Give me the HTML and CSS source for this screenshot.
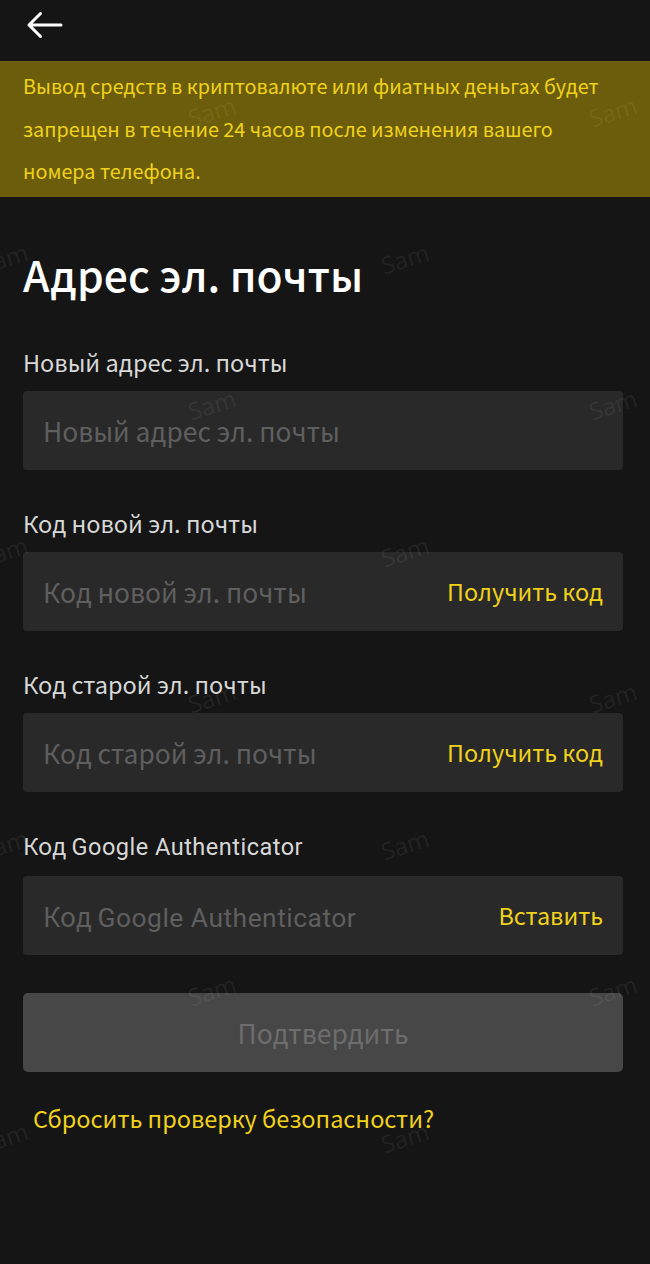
FILE: index.html
```html
<!DOCTYPE html>
<html>
<head>
    <title>Адрес эл. почты</title>
    <link rel="stylesheet" href="styles.css">
</head>
<body>
    <div class="page">
        <div class="top-bar">
            <svg class="back" width="40" height="30" viewBox="0 0 40 30">
                <path d="M5 14 H37 M5 14 L16.5 2.5 M5 14 L16.5 25.5" fill="none" stroke="#fff" stroke-width="3" stroke-linecap="round" stroke-linejoin="round"/>
            </svg>
        </div>

        <div class="notice">
            Вывод средств в криптовалюте или фиатных деньгах будет запрещен в течение 24 часов после изменения вашего номера телефона.
        </div>

        <div class="content">
            <h1>Адрес эл. почты</h1>

            <div class="field">
                <label>Новый адрес эл. почты</label>
                <div class="input">
                    <span class="placeholder">Новый адрес эл. почты</span>
                </div>
            </div>

            <div class="field">
                <label>Код новой эл. почты</label>
                <div class="input">
                    <span class="placeholder">Код новой эл. почты</span>
                    <span class="action">Получить код</span>
                </div>
            </div>

            <div class="field">
                <label>Код старой эл. почты</label>
                <div class="input">
                    <span class="placeholder">Код старой эл. почты</span>
                    <span class="action">Получить код</span>
                </div>
            </div>

            <div class="field">
                <label>Код <span class="latin">Google Authenticator</span></label>
                <div class="input">
                    <span class="placeholder">Код <span class="latin">Google Authenticator</span></span>
                    <span class="action">Вставить</span>
                </div>
            </div>

            <button class="submit">Подтвердить</button>

            <a class="reset" href="#">Сбросить проверку безопасности?</a>
        </div>

        <!-- watermark layer -->
        <div class="marks">
            <div class="mark-row odd"><span>Sam</span><span>Sam</span></div>
            <div class="mark-row even"><span>Sam</span><span>Sam</span></div>
            <div class="mark-row odd"><span>Sam</span><span>Sam</span></div>
            <div class="mark-row even"><span>Sam</span><span>Sam</span></div>
            <div class="mark-row odd"><span>Sam</span><span>Sam</span></div>
            <div class="mark-row even"><span>Sam</span><span>Sam</span></div>
            <div class="mark-row odd"><span>Sam</span><span>Sam</span></div>
            <div class="mark-row even"><span>Sam</span><span>Sam</span></div>
        </div>
    </div>
</body>
</html>
```

FILE: styles.css
```css
body {
    margin: 0;
    background: #151515;
    font-family: "Noto Sans CJK SC", "Noto Sans", sans-serif;
    color: #fff;
}
.page {
    position: relative;
    width: 650px;
    height: 1264px;
    overflow: hidden;
}
.top-bar {
    height: 61px;
    display: flex;
    align-items: center;
    padding-left: 24px;
}
.back {
    display: block;
    margin-top: -10px;
}
.notice {
    background: #6b5d0b;
    color: #f0d21c;
    font-size: 19.8px;
    line-height: 42.5px;
    padding: 4px 40px 4px 23px;
}
.content {
    padding: 0 27px 0 23px;
    display: flex;
    flex-direction: column;
}
h1 {
    margin: 52px 0 48px;
    font-size: 42.5px;
    line-height: 50px;
    font-weight: 500;
    color: #fff;
}
.field {
    display: flex;
    flex-direction: column;
    margin-bottom: 38px;
}
.field:last-of-type {
    margin-bottom: 37px;
}
label {
    font-size: 23.5px;
    line-height: 30px;
    color: #d8d8d8;
    margin-bottom: 14px;
}
.latin {
    font-family: Roboto, "Noto Sans", sans-serif;
    letter-spacing: 0.5px;
}
.input {
    height: 79px;
    background: #292929;
    border-radius: 4px;
    display: flex;
    align-items: center;
    justify-content: space-between;
    padding: 0 20px;
}
.placeholder {
    font-size: 26.4px;
    color: #5f5f5f;
}
.action {
    font-size: 23.4px;
    color: #f0d21c;
}
.submit {
    height: 79px;
    margin: 1px 0 0;
    border: none;
    border-radius: 5px;
    background: #474747;
    color: #6d6d6d;
    font-family: inherit;
    font-size: 26.5px;
}
.reset {
    margin: 30px 0 0 10px;
    font-size: 23.5px;
    line-height: 32px;
    color: #f0d21c;
    text-decoration: none;
}
.marks {
    position: absolute;
    top: 0;
    left: 0;
    right: 0;
    bottom: 0;
    padding-top: 92px;
    pointer-events: none;
    display: flex;
    flex-direction: column;
}
.mark-row {
    height: 148px;
    display: flex;
    gap: 352px;
}
.mark-row.odd {
    padding-left: 205px;
}
.mark-row.even {
    margin-left: -3px;
}
.mark-row span {
    display: block;
    font-family: "Open Sans", sans-serif;
    font-size: 24px;
    color: rgba(255, 255, 255, 0.07);
    transform: rotate(-18deg);
}
```
